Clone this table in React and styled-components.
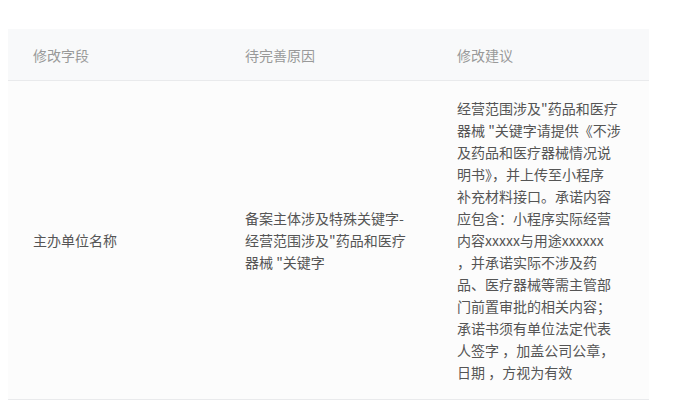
import React from "react";
import styled, { createGlobalStyle } from "styled-components";

const GlobalStyle = createGlobalStyle`
  body {
    margin: 0;
    background: #ffffff;
    font-family: "Noto Sans CJK SC", "Noto Sans", sans-serif;
  }
`;

const Page = styled.div`
  padding: 29px 0 0 8px;
`;

const Table = styled.div`
  width: 641px;
`;

const Row = styled.div`
  display: grid;
  grid-template-columns: 212px 212px 217px;
  align-items: center;
  background: ${(p) => (p.head ? "#f8f9fa" : "#fcfcfc")};
  border-bottom: 1px solid #e9eaec;
  min-height: ${(p) => (p.head ? "51px" : "auto")};
  padding: ${(p) => (p.head ? "0" : "16px 0")};
`;

const Cell = styled.div`
  padding: 0 25px;
  font-size: 14px;
  line-height: 22px;
  color: ${(p) => (p.head ? "#999999" : "#555555")};
`;

const Line = styled.span`
  display: block;
  white-space: nowrap;
`;

const rows = [
  {
    field: "主办单位名称",
    reason: ["备案主体涉及特殊关键字-", "经营范围涉及\"药品和医疗", "器械 \"关键字"],
    advice: [
      "经营范围涉及\"药品和医疗",
      "器械 \"关键字请提供《不涉",
      "及药品和医疗器械情况说",
      "明书》，并上传至小程序",
      "补充材料接口。承诺内容",
      "应包含：小程序实际经营",
      "内容xxxxx与用途xxxxxx",
      "，并承诺实际不涉及药",
      "品、医疗器械等需主管部",
      "门前置审批的相关内容；",
      "承诺书须有单位法定代表",
      "人签字 ，加盖公司公章，",
      "日期 ，方视为有效",
    ],
  },
];

const Lines = ({ items }) => items.map((t, i) => <Line key={i}>{t}</Line>);

export default function App() {
  return (
    <Page>
      <GlobalStyle />
      <Table>
        <Row head>
          <Cell head>修改字段</Cell>
          <Cell head>待完善原因</Cell>
          <Cell head>修改建议</Cell>
        </Row>
        {rows.map((r) => (
          <Row key={r.field}>
            <Cell>{r.field}</Cell>
            <Cell>
              <Lines items={r.reason} />
            </Cell>
            <Cell>
              <Lines items={r.advice} />
            </Cell>
          </Row>
        ))}
      </Table>
    </Page>
  );
}
